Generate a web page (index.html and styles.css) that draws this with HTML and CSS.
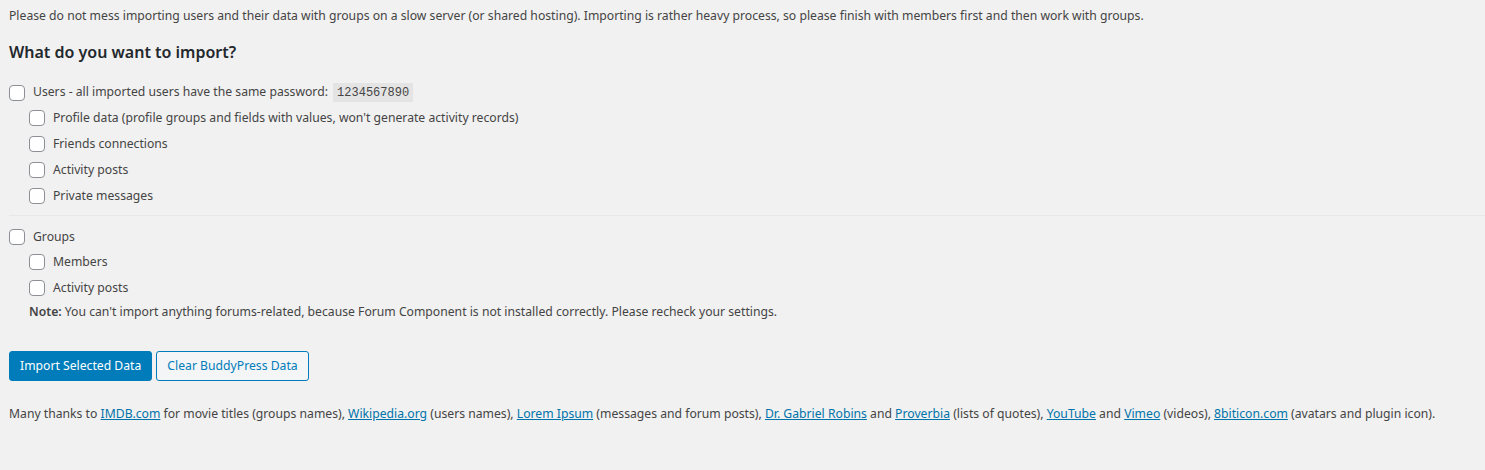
FILE: index.html
```html
<!DOCTYPE html>
<html lang="en">
<head>
<meta charset="utf-8">
<title>BuddyPress Default Data</title>
<link rel="stylesheet" href="styles.css">
</head>
<body>
<div class="wrap">
  <p class="intro">Please do not mess importing users and their data with groups on a slow server (or shared hosting). Importing is rather heavy process, so please finish with members first and then work with groups.</p>
  <h3 class="title">What do you want to import?</h3>

  <div class="section section-users">
    <label class="row row-top"><span class="cb"></span><span>Users - all imported users have the same password: <code>1234567890</code></span></label>
    <div class="sub">
      <label class="row"><span class="cb"></span><span>Profile data (profile groups and fields with values, won't generate activity records)</span></label>
      <label class="row"><span class="cb"></span><span>Friends connections</span></label>
      <label class="row"><span class="cb"></span><span>Activity posts</span></label>
      <label class="row"><span class="cb"></span><span>Private messages</span></label>
    </div>
  </div>

  <div class="section section-groups">
    <label class="row row-top"><span class="cb"></span><span>Groups</span></label>
    <div class="sub">
      <label class="row"><span class="cb"></span><span>Members</span></label>
      <label class="row"><span class="cb"></span><span>Activity posts</span></label>
      <p class="note"><strong>Note:</strong> You can't import anything forums-related, because Forum Component is not installed correctly. Please recheck your settings.</p>
    </div>
  </div>

  <div class="actions">
    <button class="btn btn-primary" type="button">Import Selected Data</button>
    <button class="btn btn-secondary" type="button">Clear BuddyPress Data</button>
  </div>

  <p class="thanks">Many thanks to <a href="#">IMDB.com</a> for movie titles (groups names), <a href="#">Wikipedia.org</a> (users names), <a href="#">Lorem Ipsum</a> (messages and forum posts), <a href="#">Dr. Gabriel Robins</a> and <a href="#">Proverbia</a> (lists of quotes), <a href="#">YouTube</a> and <a href="#">Vimeo</a> (videos), <a href="#">8biticon.com</a> (avatars and plugin icon).</p>
</div>
</body>
</html>
```

FILE: styles.css
```css
html, body {
  margin: 0;
  padding: 0;
  background: #f1f1f1;
}
body {
  font-family: "Noto Sans", "Open Sans", sans-serif;
  font-size: 12.2px;
  color: #444;
}
.wrap {
  padding: 6px 0 0 9px;
  display: flex;
  flex-direction: column;
}
.intro {
  margin: 0;
  line-height: 20px;
}
.title {
  margin: 14px 0 0;
  font-size: 16px;
  line-height: 24px;
  font-weight: 600;
  color: #23282d;
}
.section {
  display: flex;
  flex-direction: column;
}
.section-users {
  margin-top: 16px;
  padding-bottom: 6px;
  border-bottom: 1px solid #e7e7e7;
}
.section-groups {
  padding-top: 8px;
}
.sub {
  display: flex;
  flex-direction: column;
  padding-left: 20px;
}
.row {
  display: flex;
  align-items: center;
  gap: 8px;
  height: 26px;
  line-height: 20px;
}
.row-top {
  height: 25px;
}
.cb {
  flex: none;
  width: 14px;
  height: 14px;
  border: 1px solid #8c8f94;
  border-radius: 4px;
  background: #fff;
}
code {
  font-family: "Liberation Mono", "DejaVu Sans Mono", monospace;
  font-size: 12px;
  background: #e4e4e4;
  padding: 3px 4px 2px;
  margin-left: 2px;
}
.note {
  margin: 0;
  line-height: 22px;
}
.note strong {
  font-weight: 600;
}
.actions {
  display: flex;
  gap: 4px;
  margin-top: 28px;
}
.btn {
  font-family: inherit;
  font-size: 12.2px;
  height: 30px;
  padding: 0 10px;
  border-radius: 3px;
  cursor: pointer;
  line-height: 28px;
}
.btn-primary {
  background: #007cba;
  border: 1px solid #007cba;
  color: #fff;
}
.btn-secondary {
  background: #f3f5f6;
  border: 1px solid #007cba;
  color: #007cba;
}
.thanks {
  margin: 23px 0 0;
  line-height: 20px;
}
.thanks a {
  color: #0073aa;
  text-decoration: underline;
}
```
